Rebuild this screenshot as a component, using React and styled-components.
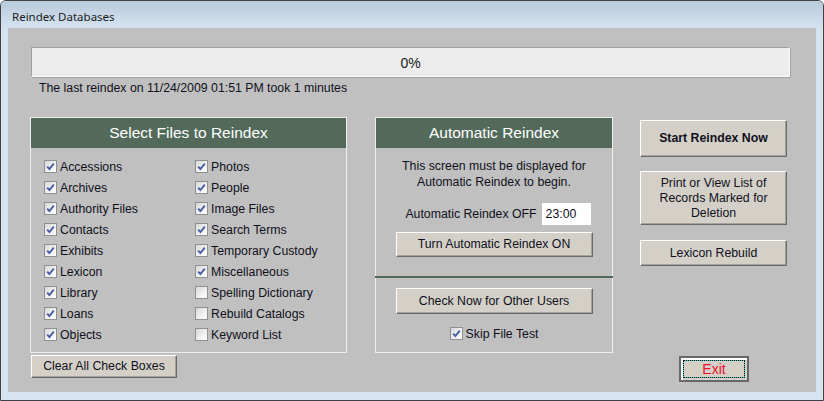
import React from 'react'
import styled, { createGlobalStyle } from 'styled-components'

const GlobalStyle = createGlobalStyle`
  html, body {
    margin: 0;
    padding: 0;
    overflow: hidden;
    background: #ffffff;
  }
  * { box-sizing: border-box; }
`;

const Window = styled.div`
  width: 824px;
  height: 401px;
  border: 1px solid #3e4146;
  border-radius: 6px 6px 0 0;
  background: #d6e3f1;
  display: flex;
  flex-direction: column;
  overflow: hidden;
`;

const TitleBar = styled.div`
  height: 27px;
  flex: none;
  display: flex;
  align-items: center;
  padding: 3px 0 0 11px;
  background: linear-gradient(#b9cadb, #d5e3f1);
  font-family: "Noto Sans", "Open Sans", sans-serif;
  font-size: 11.5px;
  color: #1b1b1b;
`;

const Client = styled.div`
  flex: 1;
  margin: 0 7px 8px 7px;
  background: #c0c0c0;
  font-family: "Liberation Sans", Arial, sans-serif;
  font-size: 12.3px;
  color: #10101c;
  padding: 19px 0 0 22px;
`;

const Progress = styled.div`
  width: 759px;
  height: 30px;
  margin-left: 1px;
  background: #ececec;
  border: 1px solid;
  border-color: #a0a0a0 #ffffff #ffffff #a0a0a0;
  box-shadow: 1px 1px 0 #a0a0a0;
  display: flex;
  align-items: center;
  justify-content: center;
  padding-top: 1px;
  font-size: 14px;
  color: #1a1a1a;
`;

const Status = styled.div`
  padding-left: 9px;
  margin-top: 3px;
  height: 16px;
  line-height: 16px;
`;

const Main = styled.div`
  margin-top: 21px;
  display: grid;
  grid-template-columns: 317px 238px 147px;
  grid-template-rows: 236px auto;
  column-gap: 28px;
`;

const Panel = styled.div`
  border: 1px solid #eeeeee;
  display: flex;
  flex-direction: column;
`;

const PanelHeader = styled.div`
  height: 30px;
  flex: none;
  background: #536a5b;
  color: #ffffff;
  font-size: 15.5px;
  display: flex;
  align-items: center;
  justify-content: center;
`;

const CheckGrid = styled.div`
  display: grid;
  grid-template-columns: 151px 1fr;
  grid-auto-flow: column;
  grid-template-rows: repeat(9, 21px);
  padding: 8px 0 0 13px;
`;

const CheckRow = styled.label`
  display: flex;
  align-items: center;
  gap: 3px;
  justify-content: ${p => (p.$center ? 'center' : 'flex-start')};
  height: 21px;
`;

const Box = styled.span`
  width: 13px;
  height: 13px;
  flex: none;
  border: 1px solid #8f9090;
  background: linear-gradient(135deg, #d8d8d8, #f6f6f6 70%, #ffffff);
  display: flex;
  align-items: center;
  justify-content: center;
`;

const Check = ({ on }) => (
  <Box>
    {on && (
      <svg width="11" height="11" viewBox="0 0 11 11">
        <path d="M2.2 5.6 L4.4 8 L8.8 2.6" fill="none" stroke="#4a5da3" strokeWidth="1.9" />
      </svg>
    )}
  </Box>
);

const Button = styled.button`
  font-family: "Liberation Sans", Arial, sans-serif;
  font-size: 12.3px;
  font-weight: ${p => (p.$bold ? 700 : 400)};
  color: #10101c;
  background: #d4d0c8;
  border: 1px solid;
  border-color: #ffffff #6a6a6a #6a6a6a #ffffff;
  box-shadow: inset -1px -1px 0 #a5a29b;
  padding: 0 4px;
  width: ${p => p.$w || 'auto'};
  height: ${p => p.$h || '26px'};
  line-height: 15px;
  margin: 0;
  cursor: pointer;
`;

const MidBody = styled.div`
  display: flex;
  flex-direction: column;
  align-items: center;
  flex: 1;
`;

const Notice = styled.div`
  margin-top: 10px;
  text-align: center;
  line-height: 16px;
`;

const TimeRow = styled.div`
  margin-top: 13px;
  display: flex;
  align-items: center;
  gap: 5px;
  margin-left: 8px;
`;

const TimeInput = styled.div`
  width: 49px;
  height: 22px;
  background: #ffffff;
  display: flex;
  align-items: center;
  padding-left: 4px;
`;

const Separator = styled.div`
  align-self: stretch;
  margin: 19px -1px 0 -1px;
  height: 2px;
  background: #536a5b;
`;

const RightCol = styled.div`
  display: flex;
  flex-direction: column;
  gap: 14px;
  padding-top: 3px;
  margin-left: -1px;
`;

const BottomLeft = styled.div`
  padding-top: 2px;
  margin-left: 1px;
`;

const ExitWrap = styled.div`
  display: flex;
  justify-content: center;
  padding-top: 3px;
  margin-left: -1px;
`;

const ExitButton = styled.button`
  width: 70px;
  height: 26px;
  padding: 2px;
  margin: 0;
  background: #d4d0c8;
  border: 2px solid #686868;
  box-shadow: inset 1px 1px 0 #ffffff, inset 2px 2px 0 #ffffff;
  display: flex;
  cursor: pointer;
`;

const Focus = styled.span`
  flex: 1;
  border: 1px dotted #111111;
  background: linear-gradient(#d4d0c8, #d4d0c8) padding-box, #35c4c4 border-box;
  display: flex;
  align-items: center;
  justify-content: center;
  font-family: "Liberation Sans", Arial, sans-serif;
  font-size: 14px;
  color: #e8142c;
`;

const files = [
  ['Accessions', true], ['Archives', true], ['Authority Files', true],
  ['Contacts', true], ['Exhibits', true], ['Lexicon', true],
  ['Library', true], ['Loans', true], ['Objects', true],
  ['Photos', true], ['People', true], ['Image Files', true],
  ['Search Terms', true], ['Temporary Custody', true], ['Miscellaneous', true],
  ['Spelling Dictionary', false], ['Rebuild Catalogs', false], ['Keyword List', false],
];

export default function App() {
  return (
    <>
      <GlobalStyle />
      <Window>
        <TitleBar>Reindex Databases</TitleBar>
        <Client>
          <Progress>0%</Progress>
          <Status>The last reindex on 11/24/2009 01:51 PM took 1 minutes</Status>
          <Main>
            <Panel>
              <PanelHeader>Select Files to Reindex</PanelHeader>
              <CheckGrid>
                {files.map(([name, on]) => (
                  <CheckRow key={name}>
                    <Check on={on} />
                    <span>{name}</span>
                  </CheckRow>
                ))}
              </CheckGrid>
            </Panel>

            <Panel>
              <PanelHeader>Automatic Reindex</PanelHeader>
              <MidBody>
                <Notice>
                  This screen must be displayed for<br />
                  Automatic Reindex to begin.
                </Notice>
                <TimeRow>
                  <span>Automatic Reindex OFF</span>
                  <TimeInput>23:00</TimeInput>
                </TimeRow>
                <Button $w="197px" $h="25px" style={{ marginTop: 7 }}>Turn Automatic Reindex ON</Button>
                <Separator />
                <Button $w="197px" style={{ marginTop: 10 }}>Check Now for Other Users</Button>
                <CheckRow $center style={{ marginTop: 9 }}>
                  <Check on />
                  <span>Skip File Test</span>
                </CheckRow>
              </MidBody>
            </Panel>

            <RightCol>
              <Button $bold $w="147px" $h="37px">Start Reindex Now</Button>
              <Button $w="147px" $h="54px">Print or View List of<br />Records Marked for<br />Deletion</Button>
              <Button $w="147px" $h="26px" style={{ marginTop: 1 }}>Lexicon Rebuild</Button>
            </RightCol>

            <BottomLeft>
              <Button $w="146px" $h="23px">Clear All Check Boxes</Button>
            </BottomLeft>
            <div />
            <ExitWrap>
              <ExitButton>
                <Focus>Exit</Focus>
              </ExitButton>
            </ExitWrap>
          </Main>
        </Client>
      </Window>
    </>
  )
}
